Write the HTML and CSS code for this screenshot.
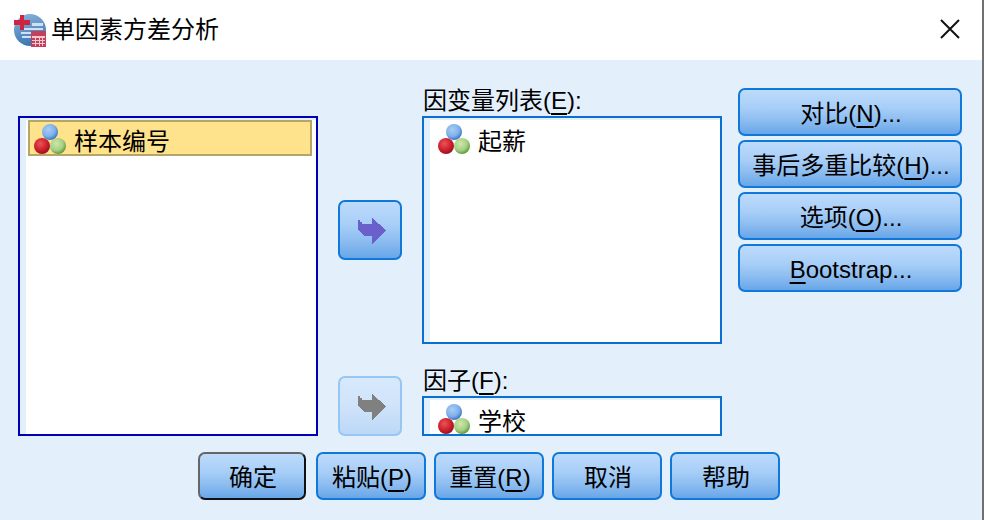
FILE: index.html
```html
<!DOCTYPE html>
<html lang="zh-CN">
<head>
<meta charset="utf-8">
<title>单因素方差分析</title>
<link rel="stylesheet" href="styles.css">
</head>
<body>
<div class="window">
  <header class="titlebar">
    <svg class="app-icon" viewBox="0 0 32 33" width="32" height="33">
      <defs>
        <radialGradient id="gb" cx="40%" cy="35%" r="65%"><stop offset="0" stop-color="#a9cdf5"/><stop offset="0.65" stop-color="#7fb0ea"/><stop offset="1" stop-color="#3a78c4"/></radialGradient>
        <radialGradient id="gr" cx="40%" cy="35%" r="65%"><stop offset="0" stop-color="#e8555c"/><stop offset="0.65" stop-color="#cc1f28"/><stop offset="1" stop-color="#9c1028"/></radialGradient>
        <radialGradient id="gg" cx="40%" cy="35%" r="65%"><stop offset="0" stop-color="#cfe6a8"/><stop offset="0.65" stop-color="#a6cf85"/><stop offset="1" stop-color="#5f9a3c"/></radialGradient>
        <linearGradient id="ga" x1="0" y1="0" x2="0.3" y2="1"><stop offset="0" stop-color="#8fb6dc"/><stop offset="1" stop-color="#3a78b4"/></linearGradient>
      </defs>
      <circle cx="16" cy="16" r="16" fill="url(#ga)"/>
      <path d="M18 9h11v3H18zM7 14h22v2H7zM7 18h10v2H7zM8 22h9v2H8z" fill="#cfe0f2"/>
      <path d="M6 1h4v5h6v5h-6v5H6v-5H0V6h6z" fill="#cf2440"/>
      <rect x="17" y="17" width="15" height="16" fill="#c2405c"/>
      <path d="M18 22h13v2H18zM18 26h13v1H18zM18 29h13v1H18zM21 22h1v10h-1zM25 22h1v10h-1zM28 22h1v10h-1z" fill="#f4c6d0"/>
    </svg>
    <h1 class="title">单因素方差分析</h1>
    <svg class="close" viewBox="0 0 20 20" width="20" height="20"><path d="M1 1L19 19M19 1L1 19" stroke="#111" stroke-width="2" fill="none"/></svg>
  </header>
  <main class="dialog">
    <div class="columns">
      <div class="col-source">
        <div class="list list-focus">
          <div class="item item-selected">
            <svg class="var-icon" viewBox="0 0 32 30" width="32" height="30"><circle cx="16" cy="8" r="8" fill="url(#gb)"/><circle cx="8" cy="22" r="8" fill="url(#gr)"/><circle cx="24" cy="22" r="8" fill="url(#gg)"/></svg>
            <span>样本编号</span>
          </div>
        </div>
      </div>
      <div class="col-arrows">
        <button class="btn arrow-btn">
          <svg viewBox="0 0 28 26" width="28" height="26" class="arrow"><path d="M0 2H2V4H4V6H14V0L28 12 14 26V18H6L0 12z" fill="#6a5fcb"/></svg>
        </button>
        <button class="btn arrow-btn disabled">
          <svg viewBox="0 0 28 26" width="28" height="26" class="arrow"><path d="M0 2H2V4H4V6H14V0L28 12 14 26V18H6L0 12z" fill="#808080"/></svg>
        </button>
      </div>
      <div class="col-target">
        <label class="label">因变量列表(<u>E</u>):</label>
        <div class="list list-dep">
          <div class="item">
            <svg class="var-icon" viewBox="0 0 32 30" width="32" height="30"><circle cx="16" cy="8" r="8" fill="url(#gb)"/><circle cx="8" cy="22" r="8" fill="url(#gr)"/><circle cx="24" cy="22" r="8" fill="url(#gg)"/></svg>
            <span>起薪</span>
          </div>
        </div>
        <label class="label label-factor">因子(<u>F</u>):</label>
        <div class="list list-factor">
          <div class="item">
            <svg class="var-icon" viewBox="0 0 32 30" width="32" height="30"><circle cx="16" cy="8" r="8" fill="url(#gb)"/><circle cx="8" cy="22" r="8" fill="url(#gr)"/><circle cx="24" cy="22" r="8" fill="url(#gg)"/></svg>
            <span>学校</span>
          </div>
        </div>
      </div>
      <div class="col-side">
        <button class="btn side-btn">对比(<u>N</u>)...</button>
        <button class="btn side-btn">事后多重比较(<u>H</u>)...</button>
        <button class="btn side-btn">选项(<u>O</u>)...</button>
        <button class="btn side-btn"><u>B</u>ootstrap...</button>
      </div>
    </div>
    <footer class="footer">
      <button class="btn foot-btn default">确定</button>
      <button class="btn foot-btn">粘贴(<u>P</u>)</button>
      <button class="btn foot-btn">重置(<u>R</u>)</button>
      <button class="btn foot-btn">取消</button>
      <button class="btn foot-btn">帮助</button>
    </footer>
  </main>
</div>
</body>
</html>
```
FILE: styles.css
```css
* { box-sizing: border-box; }
html, body { margin: 0; padding: 0; }
body {
  width: 984px;
  height: 520px;
  overflow: hidden;
  background: #fff;
  color: #000;
  font-family: "Liberation Sans", "Noto Sans CJK SC", sans-serif;
  font-size: 24px;
}
u {
  text-decoration: underline;
  text-decoration-thickness: 2px;
  text-underline-offset: 4px;
}
.window {
  width: 984px;
  height: 520px;
  display: flex;
  flex-direction: column;
  border-right: 2px solid #707070;
}
.titlebar {
  height: 60px;
  flex: none;
  display: flex;
  align-items: center;
  padding-left: 14px;
  padding-right: 22px;
  background: #fff;
}
.app-icon { flex: none; margin-top: 1px; }
.title {
  margin: 0 0 0 5px;
  font-size: 24px;
  font-weight: 400;
  line-height: 32px;
  flex: 1;
}
.close { flex: none; margin-top: -2px; }
.dialog {
  flex: 1;
  background: #e3effb;
  padding-left: 18px;
  display: flex;
  flex-direction: column;
}
.columns {
  display: flex;
  height: 376px;
  flex: none;
}
.col-source {
  width: 300px;
  padding-top: 56px;
  margin-right: 20px;
}
.col-arrows {
  width: 64px;
  padding-top: 140px;
  margin-right: 20px;
  display: flex;
  flex-direction: column;
  gap: 116px;
}
.col-target {
  width: 300px;
  padding-top: 28px;
  margin-right: 16px;
  display: flex;
  flex-direction: column;
}
.col-side {
  width: 224px;
  padding-top: 28px;
  display: flex;
  flex-direction: column;
  gap: 4px;
}
.label {
  height: 28px;
  line-height: 26px;
  padding-left: 1px;
  white-space: nowrap;
}
.label-factor { margin-top: 24px; }
.list {
  background: #fff;
  border: 2px solid #0a6fd0;
  box-shadow: inset 6px 2px 0 #e3effb;
  overflow: hidden;
  padding: 2px 0 0 6px;
}
.list-focus { height: 320px; border-color: #0000b4; }
.list-dep { height: 228px; }
.list-factor { height: 40px; }
.item {
  height: 36px;
  padding: 2px 0 0 8px;
  display: flex;
  align-items: flex-start;
  gap: 8px;
  line-height: 36px;
  white-space: nowrap;
}
.item span { display: block; margin-top: 2px; }
.var-icon { flex: none; margin-top: 2px; }
.item-selected {
  margin-left: 2px;
  width: 284px;
  padding: 0 0 0 4px;
  background: #ffe38c;
  border: 2px solid #b5a566;
}
.btn {
  font: inherit;
  color: #000;
  padding: 4px 0 0 2px;
  border: 2px solid #0f78d8;
  border-radius: 7px;
  background: linear-gradient(to bottom, #bddbfb 0%, #a8cef8 40%, #8cbcf0 70%, #68a6e8 100%);
  display: flex;
  align-items: center;
  justify-content: center;
  white-space: nowrap;
  line-height: 28px;
}
.arrow-btn { width: 64px; height: 60px; padding: 2px 0 0 4px; }
.arrow { shape-rendering: crispEdges; }
.arrow-btn.disabled {
  border-color: #96c6f4;
  background: linear-gradient(to bottom, #d8e9fc 0%, #cfe3fa 50%, #bcd8f6 100%);
}
.side-btn { width: 224px; height: 48px; }
.footer {
  margin-top: 16px;
  padding-left: 180px;
  display: flex;
}
.foot-btn { width: 110px; height: 48px; margin-right: 8px; }
.foot-btn.default {
  width: 108px;
  margin-right: 10px;
  border-color: #111 #111 #111 #666;
  border-top-color: #666;
}
```
